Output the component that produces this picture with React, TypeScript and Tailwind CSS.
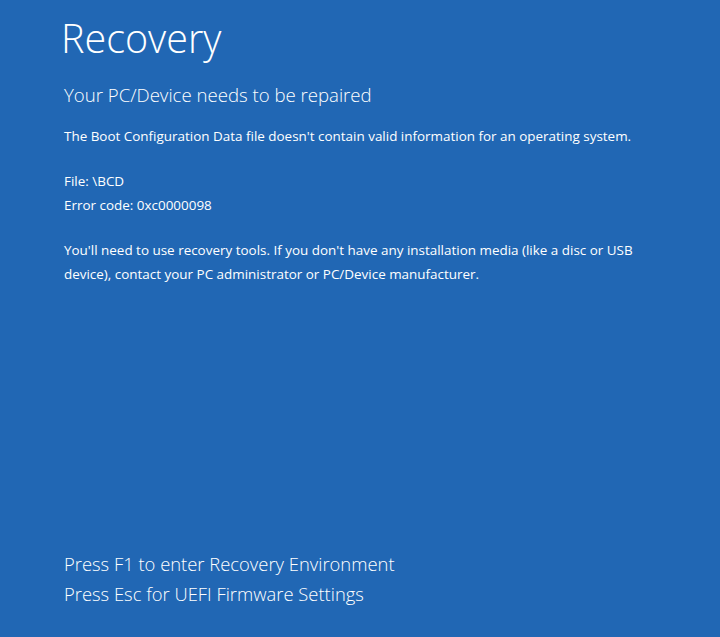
export default function App() {
  return (
    <div
      className="flex h-[637px] w-[720px] flex-col bg-[#2167b4] pl-[64px] text-white"
      style={{ fontFamily: '"Open Sans", "Noto Sans", sans-serif' }}
    >
      <h1 className="-ml-[3px] mt-[12px] text-[39.5px] font-light leading-[52px]">Recovery</h1>
      <h2 className="mt-[17px] text-[18.6px] font-light leading-[28px]">Your PC/Device needs to be repaired</h2>
      <div className="mt-[15px] text-[13.45px] leading-[24px]">
        <p>The Boot Configuration Data file doesn't contain valid information for an operating system.</p>
        <p className="mt-[21px]">File: \BCD</p>
        <p>Error code: 0xc0000098</p>
        <p className="mt-[21px] w-[590px]">
          You'll need to use recovery tools. If you don't have any installation media (like a disc or USB device), contact your PC administrator or PC/Device manufacturer.
        </p>
      </div>
      <div className="mb-[28px] mt-auto text-[18.4px] font-light leading-[30px]">
        <p>Press F1 to enter Recovery Environment</p>
        <p>Press Esc for UEFI Firmware Settings</p>
      </div>
    </div>
  );
}
